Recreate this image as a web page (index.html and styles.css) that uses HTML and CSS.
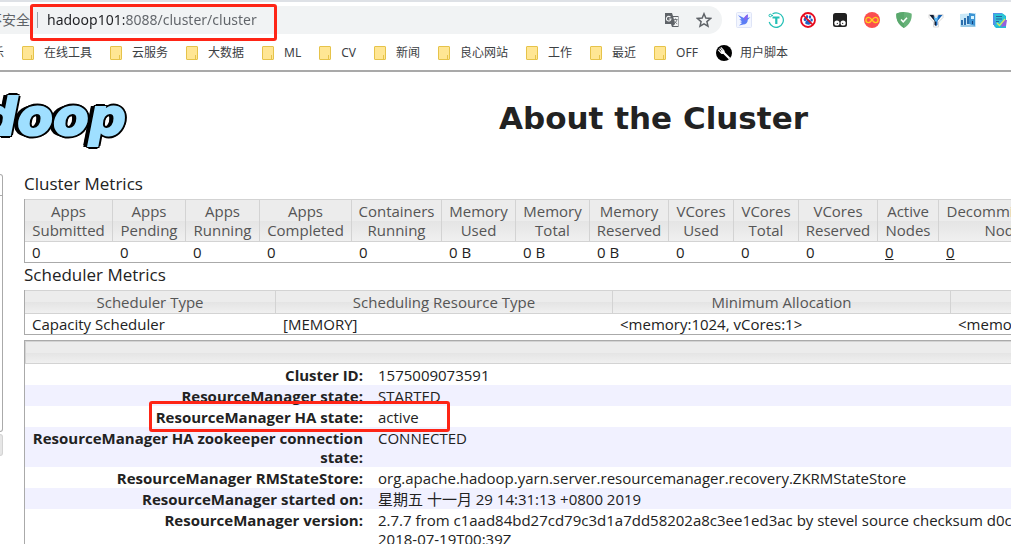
FILE: index.html
```html
<!DOCTYPE html>
<html lang="en">
<head>
<meta charset="utf-8">
<title>About the Cluster</title>
<link rel="stylesheet" href="styles.css">
</head>
<body>
<header class="browser">
  <div class="toolbar">
    <div class="omnibox">
      <label class="security" for="url">不安全</label>
      <input class="url" id="url" type="text" value="hadoop101:8088/cluster/cluster" spellcheck="false">
      <button class="icon-btn" aria-label="Translate">
        <svg width="16" height="16" viewBox="0 0 16 16"><path d="M1 1h7l1 3h5.500v11H8l-1-3H1z" fill="#5f6368"/><path d="M9.300 5H14v9H9l2-2z" fill="#f1f3f4"/><path d="M6.500 5.200A2.300 2.300 0 1 0 7 7H4.800" fill="none" stroke="#f1f3f4" stroke-width="1.100"/><path d="M9.500 7.500h4M11.500 6.500v1M13 7.500c-.4 2-1.500 3.200-3 4M10.300 8.500c.6 1.600 1.500 2.500 2.900 3.300" fill="none" stroke="#5f6368" stroke-width=".8"/></svg>
      </button>
      <button class="icon-btn" aria-label="Bookmark this page">
        <svg width="16" height="16" viewBox="0 0 16 16"><path d="M8 1.800l1.800 4.300 4.700.4-3.600 3.100 1.100 4.600L8 11.800l-4 2.400 1.100-4.600-3.600-3.100 4.700-.4z" fill="none" stroke="#5f6368" stroke-width="1.500"/></svg>
      </button>
    </div>
    <div class="extensions">
      <button class="icon-btn" aria-label="Bird"><svg width="16" height="16" viewBox="0 0 16 16"><rect x=".5" y=".5" width="15" height="15" rx="1" fill="#f3f6ff" stroke="#dfe5f7"/><path d="M2 3l6 3c1-1.500 2-3 4-3.500L11.500 6l2.800-.7-2.500 2.500c0 3-2 4.800-4.500 4.800L3 13.500 6 11 4 10l2-.7L3.300 7.500l2.200-.2z" fill="#5a7df5"/><path d="M8 6c1-1.500 2-3 4-3.500L11.500 6 9 9z" fill="#8a63f0"/></svg></button>
      <button class="icon-btn" aria-label="Text tool"><svg width="16" height="16" viewBox="0 0 16 16" fill="none" stroke="#22bfb5"><path d="M4.500 1.900A7.200 7.200 0 1 1 1.200 10" stroke-width="1.200"/><circle cx="2.300" cy="3.500" r="1.300"/><path d="M3.500 3.500H5" /><path d="M4.500 5.500h7M8.300 5.500V12" stroke-width="2.200"/></svg></button>
      <button class="icon-btn" aria-label="Search blocker"><svg width="16" height="16" viewBox="0 0 16 16"><g fill="#1f5fc4"><ellipse cx="5" cy="7.500" rx="1.300" ry="1.700"/><ellipse cx="7" cy="4.800" rx="1.200" ry="1.700"/><ellipse cx="10" cy="5" rx="1.200" ry="1.700"/><ellipse cx="11.600" cy="8" rx="1.200" ry="1.600"/><path d="M8.300 7.500c1.500 0 3.200 2.500 3 4s-5.500 1.500-6 0 1.500-4 3-4z"/></g><circle cx="8" cy="8" r="7" fill="none" stroke="#e60b1e" stroke-width="1.800"/><path d="M3 3l10 10" stroke="#e60b1e" stroke-width="1.700"/></svg></button>
      <button class="icon-btn" aria-label="Script manager"><svg width="16" height="16" viewBox="0 0 16 16"><rect x="1" y="1" width="14" height="14" rx="2.500" fill="#202020"/><circle cx="4.900" cy="11" r="2.600" fill="#fff"/><circle cx="11.100" cy="11" r="2.600" fill="#fff"/><circle cx="5.300" cy="11.300" r=".6"/><circle cx="10.700" cy="11.300" r=".6"/></svg></button>
      <button class="icon-btn" aria-label="Infinity"><svg width="16" height="16" viewBox="0 0 16 16"><circle cx="8" cy="8" r="8" fill="#fb4e50"/><path d="M8 8C6.500 6 5.700 5.400 4.500 5.400a2.600 2.600 0 0 0 0 5.200C5.700 10.600 6.500 10 8 8s2.300-2.600 3.500-2.600a2.600 2.600 0 0 1 0 5.200C10.300 10.600 9.500 10 8 8z" fill="none" stroke="#ffd21c" stroke-width="1.300"/></svg></button>
      <button class="icon-btn" aria-label="Ad blocker"><svg width="16" height="16" viewBox="0 0 16 16"><path d="M8 0c3 .2 5.500.8 7.700 1.800C16 8 13.500 13 8 16 2.500 13 0 8 .3 1.800 2.500.8 5 .2 8 0z" fill="#67b279"/><path d="M8 0v16C2.500 13 0 8 .3 1.800 2.500.8 5 .2 8 0z" fill="#5aa86d"/><path d="M5 7.500l2.200 2.300 3.800-4" fill="none" stroke="#fff" stroke-width="1.500"/></svg></button>
      <button class="icon-btn" aria-label="Gem"><svg width="16" height="16" viewBox="0 0 16 16"><path d="M1 2.500h4.500L8 4.500l2.500-2h4.500v3L10.500 10v5h-5v-5L1 5.500z" fill="#fff" stroke="#d8d8d8"/><path d="M1.500 3H5.500L8 7.500V14L6.500 13V9z" fill="#101c33"/><path d="M14.500 3h-4L8 7.500V14l1.500-1V9z" fill="#1563b5"/><path d="M5.500 4.500L8 6l2.500-1.500L9 9.500H7z" fill="#5cb8f2"/></svg></button>
      <button class="icon-btn" aria-label="Charts"><svg width="16" height="16" viewBox="0 0 16 16"><path d="M0 2l16-1v14H0z" fill="#c9e8f8"/><path d="M1 8h2v5H1zM4 6h2v7H4zM7 4h2v8H7z" fill="#2b6fae"/><path d="M9 1l6 1v12l-6-2z" fill="#3d94d3"/><path d="M11 4h3v3h-3z" fill="#d7f5ff"/><path d="M1 14h14" stroke="#66a9d2"/><path d="M12 9h1v3h-1z" fill="#183f79"/></svg></button>
      <button class="icon-btn" aria-label="Notes"><svg width="16" height="16" viewBox="0 0 16 16"><path d="M2 1h8l4 3v12H4l-2-2z" fill="#23bdd3"/><path d="M1 1h9v12H1z" fill="#5292e8"/><path d="M2 2h9l2 2v10H4z" fill="#2cc3d6"/><path d="M4 4.500h6M4 7h6M4 9.500h3" stroke="#2a5f9e"/><path d="M11 8h4l-1 6-5 1z" fill="#9362dc"/><path d="M5 11l2.500 2.500L13 7" fill="none" stroke="#d5ec5c" stroke-width="1.300"/></svg></button>
    </div>
  </div>
  <nav class="bookmarks" aria-label="Bookmarks">
    <a class="bookmark" href="#">乐</a>
    <a class="bookmark folder" href="#">在线工具</a>
    <a class="bookmark folder" href="#">云服务</a>
    <a class="bookmark folder" href="#">大数据</a>
    <a class="bookmark folder" href="#">ML</a>
    <a class="bookmark folder" href="#">CV</a>
    <a class="bookmark folder" href="#">新闻</a>
    <a class="bookmark folder" href="#">良心网站</a>
    <a class="bookmark folder" href="#">工作</a>
    <a class="bookmark folder" href="#">最近</a>
    <a class="bookmark folder" href="#">OFF</a>
    <a class="bookmark scripts" href="#"><svg width="16" height="16" viewBox="0 0 16 16"><circle cx="8" cy="8" r="8" fill="#000"/><path d="M7 7l6 6" stroke="#fff" stroke-width="2.200" stroke-linecap="round"/><path d="M2.300 4.800l3 3.200c1.500 1.300 3.700-.8 2.500-2.500l-3-3.200M3.500 3.500l3.200 3.200" fill="none" stroke="#fff" stroke-width="1.100"/><circle cx="6.500" cy="6.700" r="1.500" fill="#fff"/></svg>用户脚本</a>
  </nav>
  <div class="mark mark-url"></div>
</header>
<div class="page">
  <div class="banner">
    <div class="logo">hadoop</div>
    <h1 class="title">About the Cluster</h1>
  </div>
  <div class="layout">
    <aside class="side">
      <div class="side-panel"><div class="side-head"></div></div>
      <div class="side-tab"></div>
    </aside>
    <main class="content">
      <h2 class="heading">Cluster Metrics</h2>
      <table class="grid metrics">
        <colgroup><col class="w88"><col class="w73"><col class="w74"><col class="w92"><col class="w90"><col class="w74"><col class="w74"><col class="w79"><col class="w65"><col class="w65"><col class="w79"><col class="w61"><col class="w137"></colgroup>
        <thead><tr><th>Apps Submitted</th><th>Apps Pending</th><th>Apps Running</th><th>Apps Completed</th><th>Containers Running</th><th>Memory Used</th><th>Memory Total</th><th>Memory Reserved</th><th>VCores Used</th><th>VCores Total</th><th>VCores Reserved</th><th>Active Nodes</th><th>Decommissioned Nodes</th></tr></thead>
        <tbody><tr><td>0</td><td>0</td><td>0</td><td>0</td><td>0</td><td>0 B</td><td>0 B</td><td>0 B</td><td>0</td><td>0</td><td>0</td><td><a href="#">0</a></td><td><a href="#">0</a></td></tr></tbody>
      </table>
      <h2 class="heading second">Scheduler Metrics</h2>
      <table class="grid scheduler">
        <colgroup><col class="w251"><col class="w337"><col class="w338"><col class="w338"></colgroup>
        <thead><tr><th>Scheduler Type</th><th>Scheduling Resource Type</th><th>Minimum Allocation</th><th></th></tr></thead>
        <tbody><tr><td>Capacity Scheduler</td><td>[MEMORY]</td><td>&lt;memory:1024, vCores:1&gt;</td><td>&lt;memory</td></tr></tbody>
      </table>
      <div class="info-box">
        <div class="info-head"></div>
        <table class="info">
          <colgroup><col class="w345"><col></colgroup>
          <tbody>
            <tr><th>Cluster ID:</th><td>1575009073591</td></tr>
            <tr><th>ResourceManager state:</th><td>STARTED</td></tr>
            <tr><th><div class="mark mark-state"></div>ResourceManager HA state:</th><td>active</td></tr>
            <tr><th>ResourceManager HA zookeeper connection state:</th><td>CONNECTED</td></tr>
            <tr><th>ResourceManager RMStateStore:</th><td>org.apache.hadoop.yarn.server.resourcemanager.recovery.ZKRMStateStore</td></tr>
            <tr><th>ResourceManager started on:</th><td>星期五 十一月 29 14:31:13 +0800 2019</td></tr>
            <tr><th>ResourceManager version:</th><td>2.7.7 from c1aad84bd27cd79c3d1a7dd58202a8c3ee1ed3ac by stevel source checksum d0c7<br>2018-07-19T00:39Z</td></tr>
          </tbody>
        </table>
      </div>
    </main>
  </div>
</div>
</body>
</html>
```
FILE: styles.css
```css
*, *::before { box-sizing: border-box; }
html { height: 100%; overflow: hidden; }
body {
  margin: 0;
  height: 100%;
  overflow: hidden;
  background: #fff;
  color: #222;
  font: 15px/19px "Open Sans", "Noto Sans CJK SC", sans-serif;
}

/* browser chrome */
.browser {
  position: relative;
  border-top: 2px solid #dee1e6;
  border-bottom: 2px solid #a9a9a9;
}
.toolbar {
  display: flex;
  align-items: center;
  gap: 14px;
  padding: 4px 3px 0 0;
}
.omnibox {
  flex: 1;
  display: flex;
  align-items: center;
  gap: 16px;
  height: 28px;
  padding-right: 10px;
  border-radius: 0 14px 14px 0;
  background: #f1f3f4;
}
.security {
  margin-left: -12px;
  padding-right: 7px;
  border-right: 1px solid #9aa0a6;
  color: #5f6368;
  font-size: 14px;
  line-height: 16px;
  white-space: nowrap;
}
.url {
  flex: 1;
  min-width: 0;
  margin-left: -7px;
  padding: 0;
  border: 0;
  outline: 0;
  font: 14px/20px "Noto Sans", sans-serif;
  color: transparent;
  background: linear-gradient(90deg, #202124 77px, #5f6368 77px);
  background-clip: text;
  -webkit-background-clip: text;
}
.icon-btn {
  display: block;
  width: 16px;
  height: 16px;
  padding: 0;
  border: 0;
  background: none;
}
.icon-btn svg { display: block; }
.extensions { display: flex; gap: 16px; }
.bookmarks {
  display: flex;
  align-items: center;
  gap: 18px;
  height: 36px;
  margin-left: -8px;
  padding-top: 1px;
  font: 12px/16px "Noto Sans", "Noto Sans CJK SC", sans-serif;
}
.bookmark {
  display: flex;
  align-items: center;
  gap: 10px;
  color: #3c4043;
  text-decoration: none;
  white-space: nowrap;
}
.folder::before {
  content: "";
  width: 12px;
  height: 14px;
  border: 1px solid #e6c34a;
  border-radius: 1px;
  background: linear-gradient(#e6c34a, #e6c34a) 8px 8px / 1px 4px no-repeat, #ffe694;
}
.scripts { gap: 8px; }
.mark {
  position: absolute;
  border: 3px solid #fe2516;
  border-radius: 3px;
  pointer-events: none;
}
.mark-url { left: 30px; top: 2px; width: 247px; height: 37px; }
.mark-state { left: 124px; top: -5px; width: 301px; height: 31px; }

/* cluster page */
.banner {
  display: flex;
  height: 102px;
}
.logo {
  display: flex;
  flex: none;
  justify-content: flex-end;
  width: 128px;
  padding: 15px 2px 0 0;
  font: italic bold 52px/60px "DejaVu Sans", sans-serif;
  color: #9fdfff;
  -webkit-text-stroke: 2px #9fdfff;
  text-shadow: 3px 0 #000, 2px 2px #000, 2px -2px #000, 0 3px #000, 0 -3px #000,
    -2px 2px #000, -2px -2px #000, -5px 1px #000, -5px -1px #000;
}
.title {
  flex: 1;
  margin: 0;
  padding: 26px 0 0 168px;
  text-align: center;
  white-space: nowrap;
  font: bold 31px/40px "DejaVu Sans", sans-serif;
}
.layout { display: flex; }
.side { flex: none; width: 24px; }
.side-panel {
  width: 3px;
  height: 258px;
  border: solid #aaa;
  border-width: 1px 1px 1px 0;
  border-radius: 0 4px 4px 0;
}
.side-head { height: 21px; border-bottom: 1px solid #aaa; }
.side-tab {
  width: 3px;
  height: 22px;
  margin-top: 2px;
  border: solid #d3d3d3;
  border-width: 1px 1px 1px 0;
  border-radius: 0 4px 4px 0;
  background: #e6e6e6;
}
.content { flex: 1; min-width: 0; }
.heading {
  margin: 0;
  height: 25px;
  font-size: 17px;
  font-weight: normal;
  line-height: 20px;
}
.second { height: 27px; padding-top: 2px; }
.grid, .info {
  table-layout: fixed;
  border-collapse: separate;
  border-spacing: 0;
}
.grid { border: solid #aaa; border-width: 0 0 1px 1px; }
.metrics { width: 1051px; }
.scheduler { width: 1264px; }
.grid th {
  padding: 2px 4px 1px;
  border: solid #d3d3d3;
  border-width: 1px 1px 1px 0;
  background: linear-gradient(#ececec 50%, #e4e4e4 50%, #f0f0f0);
  color: #555;
  font-weight: normal;
}
.grid td { padding: 1px 7px 0; }
.grid a { color: inherit; }
.w61 { width: 61px; }
.w65 { width: 65px; }
.w73 { width: 73px; }
.w74 { width: 74px; }
.w79 { width: 79px; }
.w88 { width: 88px; }
.w90 { width: 90px; }
.w92 { width: 92px; }
.w137 { width: 137px; }
.w251 { width: 251px; }
.w337 { width: 337px; }
.w338 { width: 338px; }
.w345 { width: 345px; }
.info-box {
  margin-top: 5px;
  border: solid #aaa;
  border-width: 1px 0 0 1px;
}
.info-head {
  height: 23px;
  border: solid #d3d3d3;
  border-width: 1px 0 1px 1px;
  background: linear-gradient(#ececec 50%, #e4e4e4 50%, #f0f0f0);
}
.info { width: 100%; }
.info th {
  position: relative;
  padding: 2px 7px 0 0;
  text-align: right;
  vertical-align: top;
}
.info td { padding: 2px 0 0 8px; vertical-align: top; white-space: nowrap; }
.info tr:nth-child(even) { background: #f1f1ff; }
```
